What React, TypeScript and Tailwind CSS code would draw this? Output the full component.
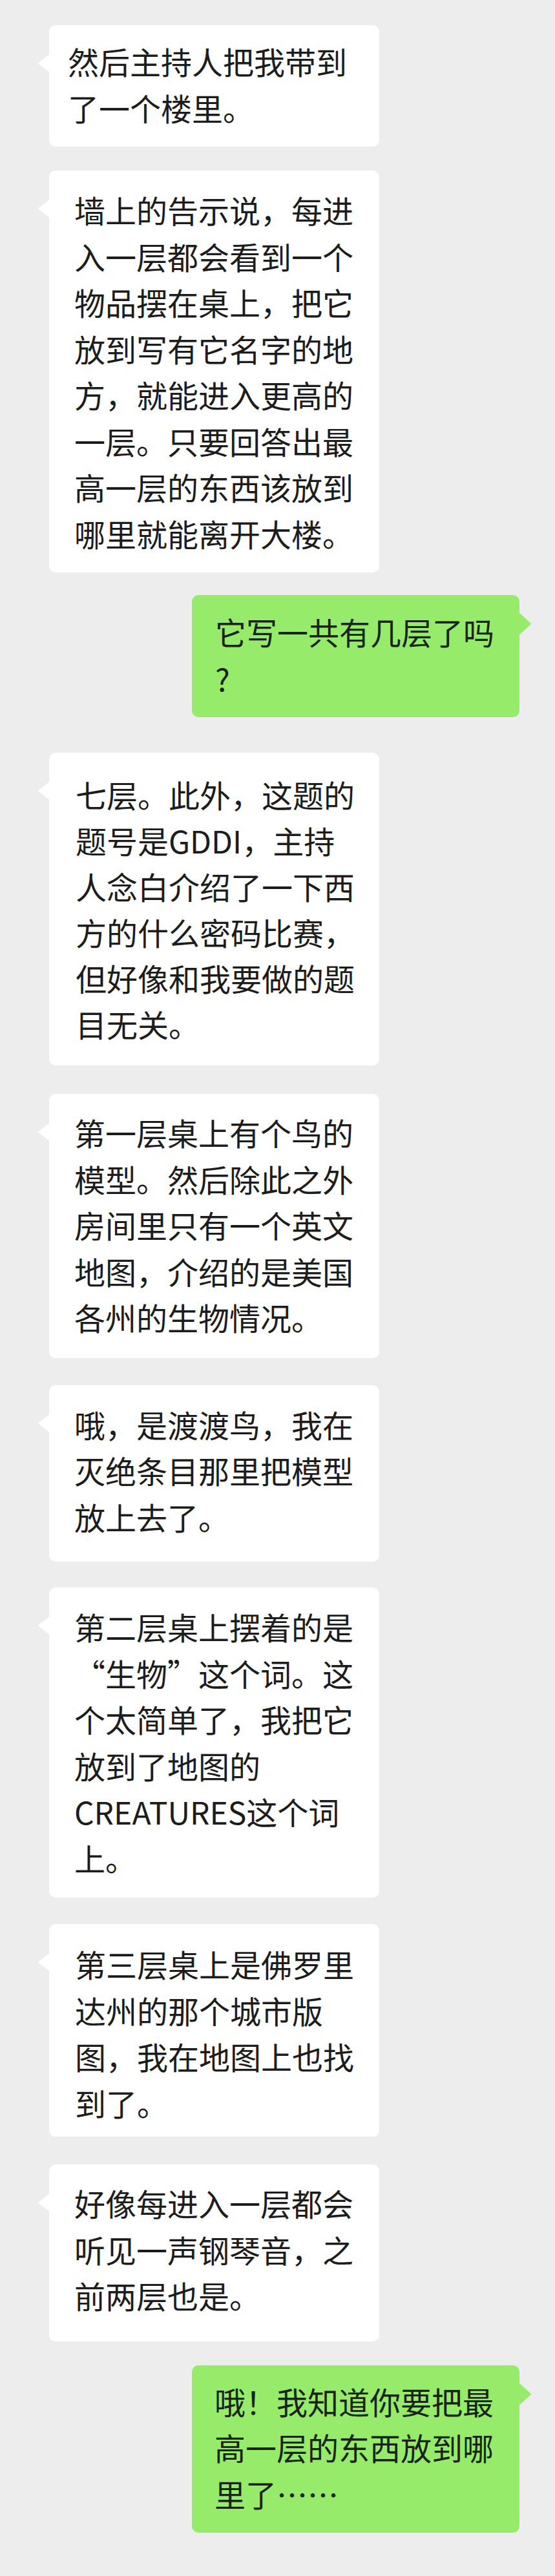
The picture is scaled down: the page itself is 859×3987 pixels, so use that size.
type Side = 'left' | 'right';

type Message = {
    side: Side;
    lines: string[];
    // spacing is per bubble: the source screenshot is a stitched chat log
    gap: string;
    pad: string;
    leading: string;
};

const messages: Message[] = [
    {
        side: 'left',
        lines: ['然后主持人把我带到', '了一个楼里。'],
        gap: 'mt-[39px]',
        pad: 'pt-[19px] pb-[25px] pl-[29px]',
        leading: 'leading-[72px]',
    },
    {
        side: 'left',
        lines: [
            '墙上的告示说，每进',
            '入一层都会看到一个',
            '物品摆在桌上，把它',
            '放到写有它名字的地',
            '方，就能进入更高的',
            '一层。只要回答出最',
            '高一层的东西该放到',
            '哪里就能离开大楼。',
        ],
        gap: 'mt-[37px]',
        pad: 'pt-[25px] pb-[25px] pl-[39px]',
        leading: 'leading-[71.5px]',
    },
    {
        side: 'right',
        lines: ['它写一共有几层了吗', '?'],
        gap: 'mt-[35px]',
        pad: 'pt-[21px] pb-[25px] pl-[36px]',
        leading: 'leading-[71.5px]',
    },
    {
        side: 'left',
        lines: [
            '七层。此外，这题的',
            '题号是GDDI，主持',
            '人念白介绍了一下西',
            '方的什么密码比赛，',
            '但好像和我要做的题',
            '目无关。',
        ],
        gap: 'mt-[55px]',
        pad: 'pt-[29px] pb-[29px] pl-[41px]',
        leading: 'leading-[71px]',
    },
    {
        side: 'left',
        lines: [
            '第一层桌上有个鸟的',
            '模型。然后除此之外',
            '房间里只有一个英文',
            '地图，介绍的是美国',
            '各州的生物情况。',
        ],
        gap: 'mt-[44px]',
        pad: 'pt-[24px] pb-[27px] pl-[39px]',
        leading: 'leading-[71.5px]',
    },
    {
        side: 'left',
        lines: ['哦，是渡渡鸟，我在', '灭绝条目那里把模型', '放上去了。'],
        gap: 'mt-[42px]',
        pad: 'pt-[25px] pb-[34px] pl-[39px]',
        leading: 'leading-[71.5px]',
    },
    {
        side: 'left',
        lines: [
            '第二层桌上摆着的是',
            '“生物”这个词。这',
            '个太简单了，我把它',
            '放到了地图的',
            'CREATURES这个词',
            '上。',
        ],
        gap: 'mt-[40px]',
        pad: 'pt-[25px] pb-[26px] pl-[39px]',
        leading: 'leading-[71.5px]',
    },
    {
        side: 'left',
        lines: ['第三层桌上是佛罗里', '达州的那个城市版', '图，我在地图上也找', '到了。'],
        gap: 'mt-[41px]',
        pad: 'pt-[26px] pb-[17px] pl-[40px]',
        leading: 'leading-[71.5px]',
    },
    {
        side: 'left',
        lines: ['好像每进入一层都会', '听见一声钢琴音，之', '前两层也是。'],
        gap: 'mt-[43px]',
        pad: 'pt-[24px] pb-[35px] pl-[39px]',
        leading: 'leading-[71.5px]',
    },
    {
        side: 'right',
        lines: ['哦！我知道你要把最', '高一层的东西放到哪', '里了……'],
        gap: 'mt-[37px]',
        pad: 'pt-[20px] pb-[25px] pl-[35px]',
        leading: 'leading-[71.5px]',
    },
];

function Bubble({ msg }: { msg: Message }) {
    const isLeft = msg.side === 'left';
    return (
        <div
            className={
                isLeft
                    ? `relative self-start ml-[76px] w-[511px] rounded-[10px] bg-white text-[#1c1c1c] ${msg.gap} ${msg.pad}`
                    : `relative self-end mr-[55px] w-[507px] rounded-[10px] bg-[#97eb6a] text-[#172313] ${msg.gap} ${msg.pad}`
            }
        >
            {isLeft ? (
                <svg className="absolute left-[-18px] top-[46px]" width="19" height="26" viewBox="0 0 19 26">
                    <polygon points="19,0 2,13 19,26" fill="#ffffff" stroke="#ffffff" strokeWidth="2" strokeLinejoin="round" />
                </svg>
            ) : (
                <svg className="absolute right-[-19px] top-[28px]" width="20" height="33" viewBox="0 0 20 33">
                    <polygon points="0,0 18,16.5 0,33" fill="#97eb6a" stroke="#97eb6a" strokeWidth="2" strokeLinejoin="round" />
                </svg>
            )}
            <div className={`text-[48px] ${msg.leading}`}>
                {msg.lines.map((line, i) => (
                    <div key={i} className="whitespace-nowrap">
                        {line}
                    </div>
                ))}
            </div>
        </div>
    );
}

export default function App() {
    return (
        <div
            lang="zh-CN"
            className="min-h-[3987px] w-full overflow-hidden bg-[#ededed] font-['Noto_Sans_CJK_SC','Noto_Sans',sans-serif]"
        >
            <div className="flex flex-col">
                {messages.map((m, i) => (
                    <Bubble key={i} msg={m} />
                ))}
            </div>
        </div>
    );
}
